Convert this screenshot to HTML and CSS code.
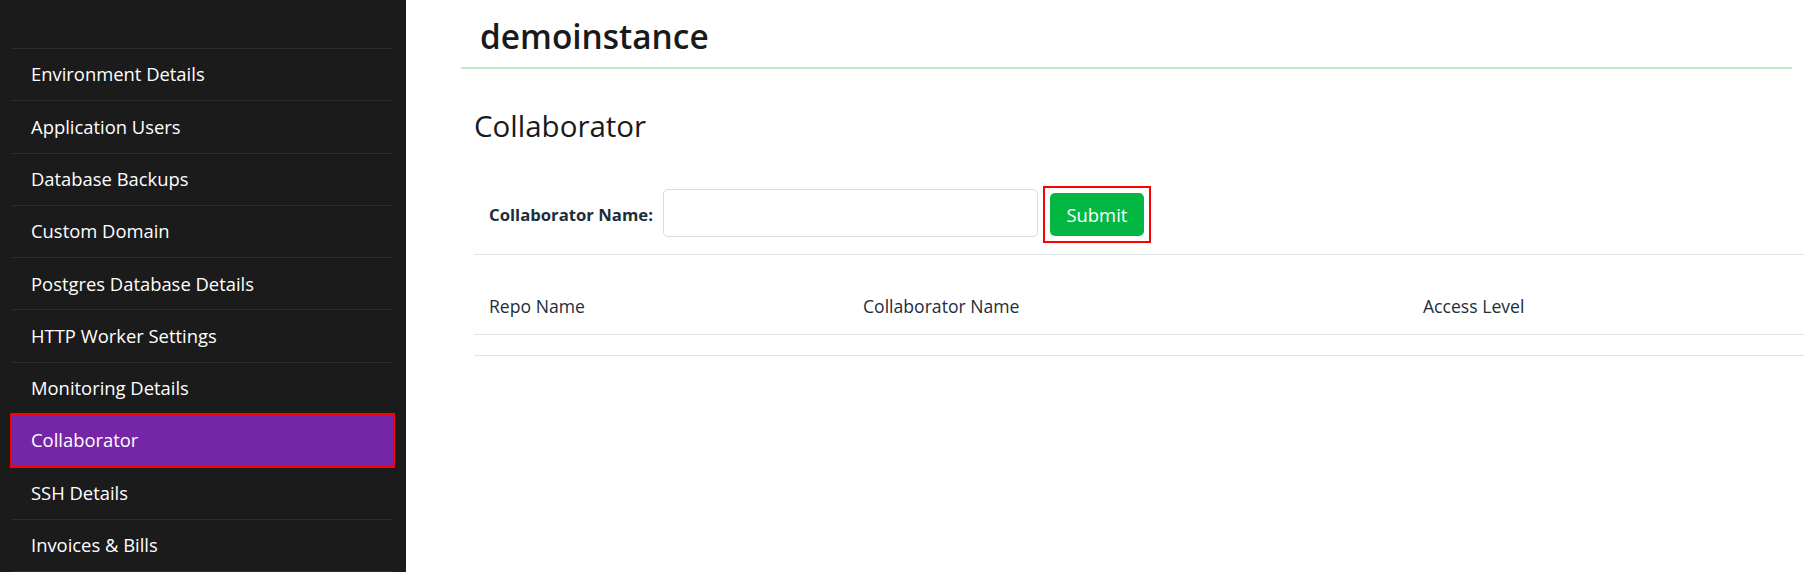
FILE: index.html
```html
<!DOCTYPE html>
<html lang="en">
<head>
    <meta charset="UTF-8">
    <meta name="viewport" content="width=device-width, initial-scale=1.0">
    <title>demoinstance - Collaborator</title>
    <link rel="stylesheet" href="styles.css">
</head>
<body>
    <div class="layout">
        <!-- Left navigation -->
        <nav class="sidebar">
            <ul class="side-menu">
                <li><a href="#">Environment Details</a></li>
                <li><a href="#">Application Users</a></li>
                <li><a href="#">Database Backups</a></li>
                <li><a href="#">Custom Domain</a></li>
                <li><a href="#">Postgres Database Details</a></li>
                <li><a href="#">HTTP Worker Settings</a></li>
                <li><a href="#">Monitoring Details</a></li>
                <li class="active"><a href="#">Collaborator</a></li>
                <li><a href="#">SSH Details</a></li>
                <li><a href="#">Invoices &amp; Bills</a></li>
            </ul>
        </nav>

        <main class="main">
            <div class="page-header">demoinstance</div>

            <section class="content">
                <h2 class="section-title">Collaborator</h2>

                <form class="collab-form" onsubmit="return false;">
                    <label for="collab-name">Collaborator Name:</label>
                    <input type="text" id="collab-name">
                    <div class="submit-wrap">
                        <button type="submit" class="btn-submit">Submit</button>
                    </div>
                </form>

                <table class="collab-table">
                    <colgroup>
                        <col class="col-repo">
                        <col class="col-name">
                        <col class="col-access">
                    </colgroup>
                    <thead>
                        <tr>
                            <th>Repo Name</th>
                            <th>Collaborator Name</th>
                            <th>Access Level</th>
                        </tr>
                    </thead>
                    <tbody>
                        <tr class="empty-row"><td colspan="3"></td></tr>
                    </tbody>
                </table>
            </section>
        </main>
    </div>
</body>
</html>
```

FILE: styles.css
```css
* {
    box-sizing: border-box;
}
body {
    margin: 0;
    font-family: "Open Sans", Arial, sans-serif;
    background-color: #fff;
}
.layout {
    display: flex;
    min-height: 572px;
}

/* Sidebar */
.sidebar {
    width: 406px;
    flex-shrink: 0;
    background-color: #1b1b1b;
    padding-top: 48px;
}
.side-menu {
    list-style: none;
    margin: 0 13px 0 12px;
    padding: 0;
    border-top: 1px solid #2d2d2d;
}
.side-menu li {
    border-bottom: 1px solid #2d2d2d;
}
.side-menu a {
    display: block;
    padding: 12.4px 19px 12.9px;
    line-height: 26px;
    font-size: 18.4px;
    color: #fff;
    text-decoration: none;
}
.side-menu li.active {
    border-bottom-color: #7526a6;
}
.side-menu li.active a {
    background-color: #7526a6;
    outline: 2px solid #f00; /* highlight box */
}

/* Main area */
.main {
    flex: 1;
    padding: 0 12px 0 55px;
}
.page-header {
    margin-right: 12px;
    padding: 16px 0 11px 19px;
    line-height: 40px;
    font-size: 33.4px;
    font-weight: 600;
    color: #1a1a1a;
    border-bottom: 2px solid #c3e6cb;
}
.content {
    margin-left: 13px;
}
.section-title {
    margin: 39px 0 0;
    font-size: 29.5px;
    line-height: 36px;
    font-weight: 400;
    color: #1a1a1a;
}

/* Form row */
.collab-form {
    display: flex;
    align-items: center;
    margin-top: 42px;
    padding: 0 15px 11px;
    border-bottom: 1px solid #dee2e6;
}
.collab-form label {
    font-size: 16.7px;
    font-weight: 700;
    color: #1b2e3c;
    margin-right: 10px;
}
.collab-form input {
    width: 375px;
    height: 48px;
    margin-top: -3px;
    border: 1px solid #dcdcdc;
    border-radius: 5px;
    padding: 6px 12px;
    font-size: 16px;
    font-family: inherit;
}
.submit-wrap {
    margin-left: 5px;
    padding: 5px;
    border: 2px solid #f00; /* highlight box */
}
.btn-submit {
    display: block;
    width: 94px;
    height: 43px;
    background-color: #02b843;
    color: #fff;
    border: none;
    border-radius: 5px;
    font-family: inherit;
    font-size: 18.4px;
    cursor: pointer;
}

/* Table */
.collab-table {
    width: 100%;
    margin-top: 26px;
    border-collapse: collapse;
    table-layout: fixed;
}
.col-repo { width: 374px; }
.col-name { width: 560px; }
.collab-table th {
    text-align: left;
    padding: 12px 15px 14px;
    line-height: 27px;
    font-size: 17.6px;
    font-weight: 400;
    color: #1b2e3c;
    border-bottom: 1px solid #dee2e6;
}
.empty-row td {
    height: 21px;
    padding: 0;
    border-bottom: 1px solid #dee2e6;
}
```
